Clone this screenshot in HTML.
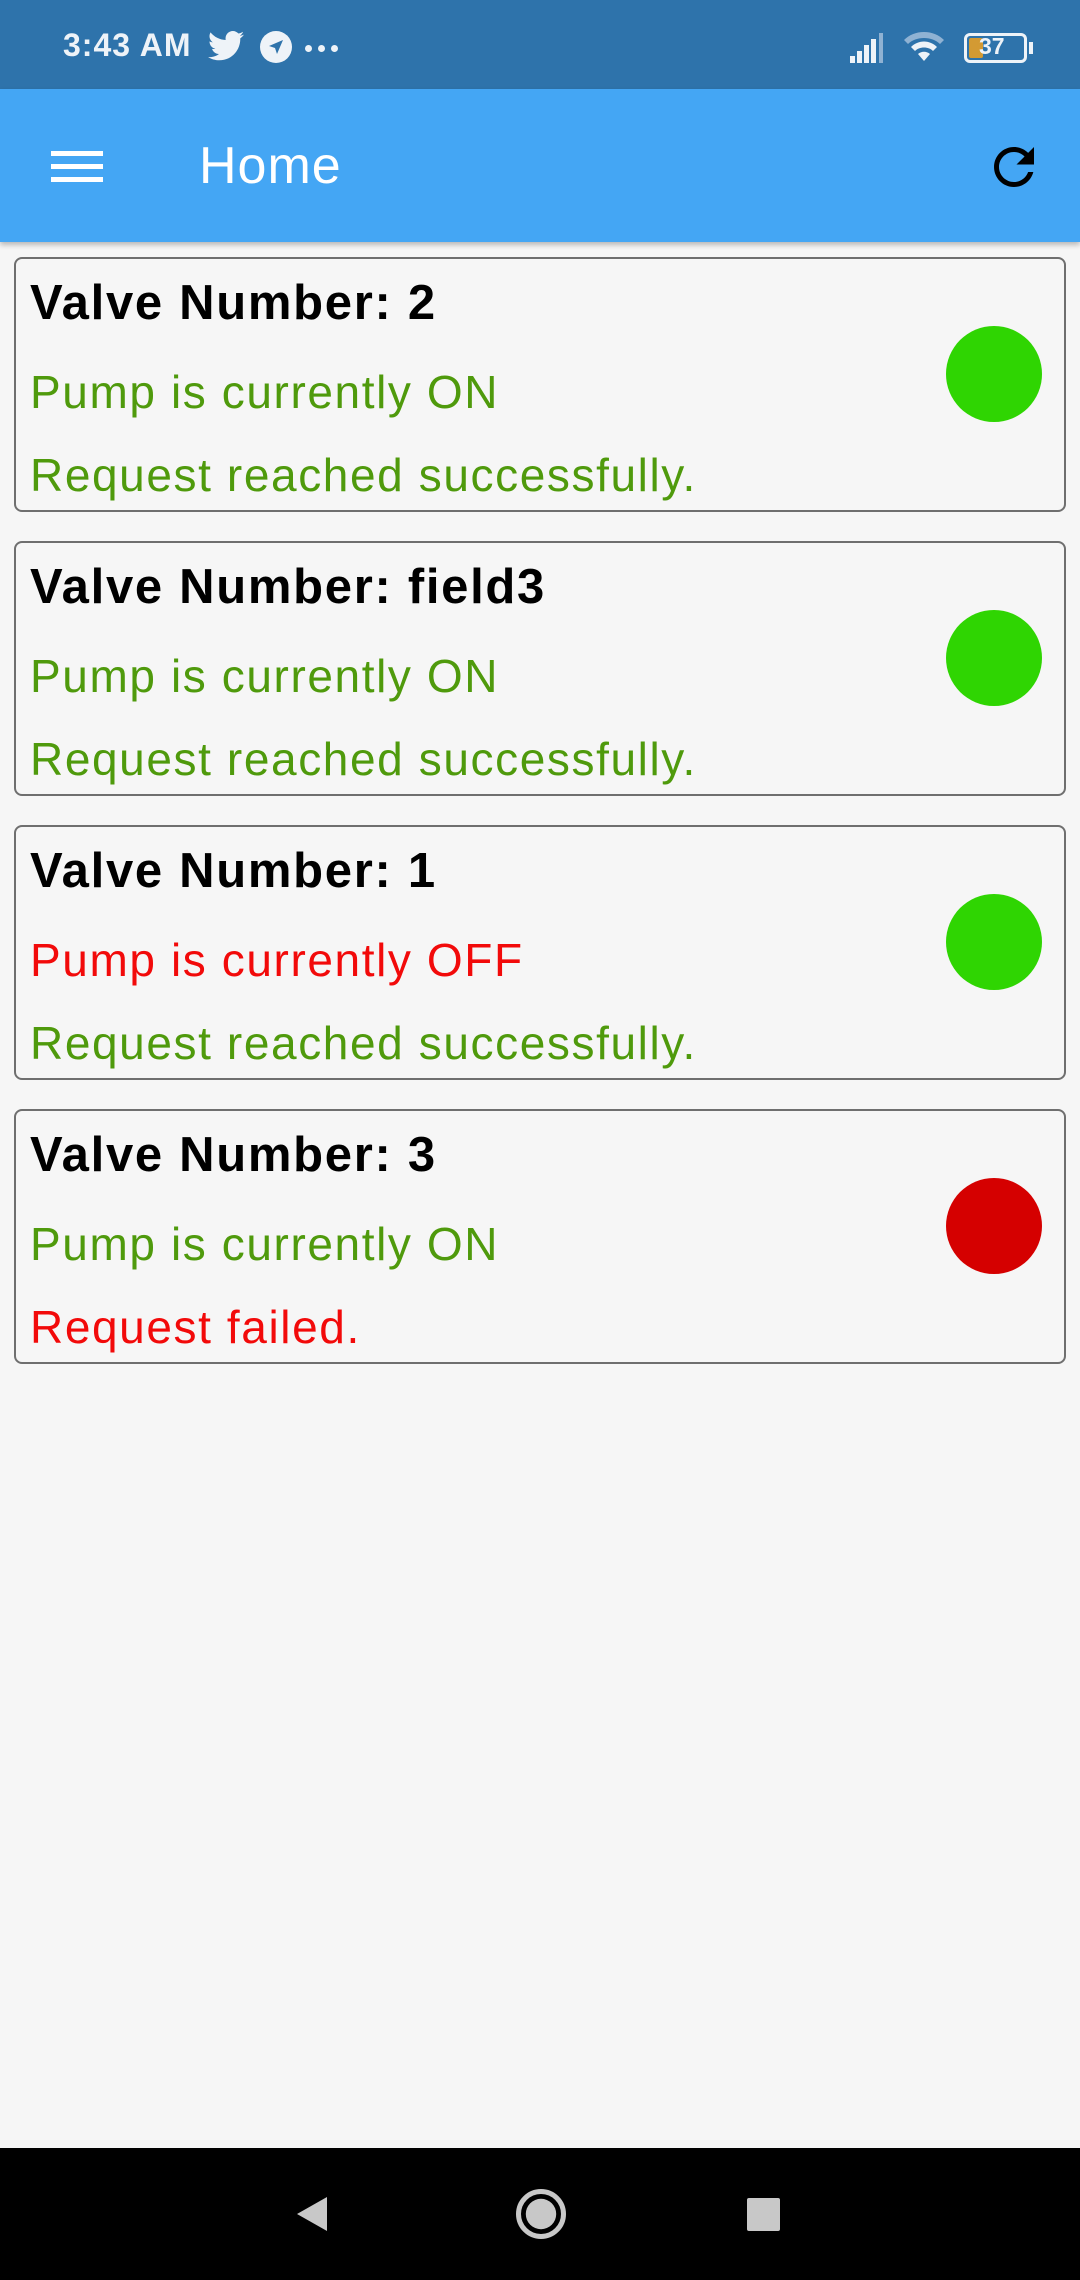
<!DOCTYPE html>
<html><head><meta charset="utf-8"><style>
*{margin:0;padding:0;box-sizing:border-box}
body{width:1080px;height:2280px;background:#f6f6f6;position:relative;overflow:hidden;font-family:"Liberation Sans",Arial,sans-serif}
.sb{position:absolute;left:0;top:0;width:1080px;height:89px;background:#2e73ab;color:#eef3f8}
.ab{position:absolute;left:0;top:89px;width:1080px;height:153px;background:#44a6f4;box-shadow:0 3px 5px rgba(0,0,0,.25)}
.card{position:absolute;left:14px;width:1052px;height:255px;border:2.5px solid #6f6f6f;border-radius:8px;background:#f6f6f6}
.t{position:absolute;left:14px;top:16px;font-size:49px;font-weight:bold;color:#000;letter-spacing:1.7px}
.l{position:absolute;left:14px;font-size:46px;letter-spacing:1.6px}
.g{color:#4f9a0c}.r{color:#f20a0a}
.dot{position:absolute;left:930px;top:67px;width:96px;height:96px;border-radius:50%}
.nav{position:absolute;left:0;top:2148px;width:1080px;height:132px;background:#000}
</style></head><body>
<div class="sb">
<div style="position:absolute;left:63px;top:27px;font-size:32px;font-weight:bold;letter-spacing:1px">3:43 AM</div>
<svg style="position:absolute;left:208px;top:31px" width="36" height="30" viewBox="0 0 24 20"><path fill="#eef3f8" d="M24 2.4c-.9.4-1.8.6-2.8.8 1-.6 1.8-1.6 2.200-2.7-1 .6-2 1-3.1 1.2C19.3.7 18 0 16.6 0c-2.7 0-4.9 2.2-4.9 4.9 0 .4 0 .8.1 1.1C7.7 5.8 4.1 3.9 1.7.9c-.4.7-.7 1.6-.7 2.5 0 1.7.9 3.2 2.2 4.1-.8 0-1.6-.2-2.2-.6v.1c0 2.4 1.7 4.4 3.9 4.8-.4.1-.8.2-1.3.2-.3 0-.6 0-.9-.1.6 2 2.4 3.4 4.6 3.4-1.7 1.3-3.8 2.1-6.1 2.1-.4 0-.8 0-1.2-.1 2.2 1.4 4.8 2.2 7.5 2.2 9.1 0 14-7.5 14-14v-.6c1-.7 1.8-1.600 2.5-2.5z"/></svg>
<svg style="position:absolute;left:259px;top:30px" width="34" height="34" viewBox="0 0 34 34"><circle cx="17" cy="17" r="16" fill="#eef3f8"/><path d="M24 10 L10 16 L16 18 L18 24 Z" fill="#2e73ab"/></svg>
<div style="position:absolute;left:305px;top:45px;width:7px;height:7px;border-radius:50%;background:#eef3f8;box-shadow:13px 0 #eef3f8,26px 0 #eef3f8"></div>
<svg style="position:absolute;left:848px;top:33px" width="40" height="30" viewBox="0 0 40 30"><path fill="#eef3f8" d="M2 30h5v-7H2zM9 30h5V18H9zM16 30h5V12h-5zM23 30h5V6h-5z"/><path fill="#8fb2d3" d="M31 30h4V0h-4z"/></svg>
<svg style="position:absolute;left:904px;top:30px" width="40" height="34" viewBox="0 0 40 34"><path fill="#8fb2d3" d="M20 2C12 2 5 5 0 10l4 4c4-4 10-6 16-6s12 2 16 6l4-4C35 5 28 2 20 2z"/><path fill="#eef3f8" d="M7 17l4 4c2.5-2.5 5.5-3.5 9-3.5s6.5 1 9 3.5l4-4c-3.5-3.5-8-5.5-13-5.5S10.5 13.5 7 17zM14 24l6 7 6-7c-1.7-1.5-3.700-2.3-6-2.3s-4.3.8-6 2.3z"/></svg>
<div style="position:absolute;left:964px;top:33px;width:63px;height:30px;border:3px solid #eef3f8;border-radius:6px"></div>
<div style="position:absolute;left:969px;top:38px;width:14px;height:20px;background:#d39a33;border-radius:2px"></div>
<div style="position:absolute;left:1029px;top:42px;width:4px;height:12px;background:#eef3f8"></div>
<div style="position:absolute;left:979px;top:33px;font-size:23px;font-weight:bold;color:#eef3f8">37</div>
</div>
<div class="ab">
<div style="position:absolute;left:51px;top:62px;width:52px;height:5px;background:#fff;box-shadow:0 13px #fff,0 26px #fff"></div>
<div style="position:absolute;left:199px;top:47px;font-size:52px;color:#fff;letter-spacing:1px">Home</div>
<svg style="position:absolute;left:984px;top:48px" width="60" height="60" viewBox="0 0 24 24"><path fill="#000" d="M17.65 6.35C16.2 4.9 14.21 4 12 4c-4.42 0-7.99 3.58-7.99 8s3.57 8 7.99 8c3.73 0 6.84-2.55 7.73-6h-2.08c-.82 2.33-3.04 4-5.650 4-3.31 0-6-2.69-6-6s2.69-6 6-6c1.66 0 3.14.69 4.22 1.78L13 11h7V4l-2.35 2.35z"/></svg>
</div>

<div class="card" style="top:257px"><div class="t">Valve Number: 2</div><div class="l g" style="top:106px">Pump is currently ON</div><div class="l g" style="top:189px">Request reached successfully.</div><div class="dot" style="background:#2fd502"></div></div>
<div class="card" style="top:541px"><div class="t">Valve Number: field3</div><div class="l g" style="top:106px">Pump is currently ON</div><div class="l g" style="top:189px">Request reached successfully.</div><div class="dot" style="background:#2fd502"></div></div>
<div class="card" style="top:825px"><div class="t">Valve Number: 1</div><div class="l r" style="top:106px">Pump is currently OFF</div><div class="l g" style="top:189px">Request reached successfully.</div><div class="dot" style="background:#2fd502"></div></div>
<div class="card" style="top:1109px"><div class="t">Valve Number: 3</div><div class="l g" style="top:106px">Pump is currently ON</div><div class="l r" style="top:189px">Request failed.</div><div class="dot" style="background:#d50000"></div></div>

<div class="nav">
<svg style="position:absolute;left:295px;top:47px" width="34" height="38" viewBox="0 0 34 38"><path d="M32 2 L2 19 L32 36 Z" fill="#c8c8c8"/></svg>
<div style="position:absolute;left:516px;top:41px;width:50px;height:50px;border:5px solid #c8c8c8;border-radius:50%"></div>
<div style="position:absolute;left:533px;top:58px;width:16px;height:16px;background:#c8c8c8;border-radius:50%;transform:scale(1.9)"></div>
<div style="position:absolute;left:747px;top:50px;width:33px;height:33px;background:#c8c8c8;border-radius:2px"></div>
</div>
</body></html>
